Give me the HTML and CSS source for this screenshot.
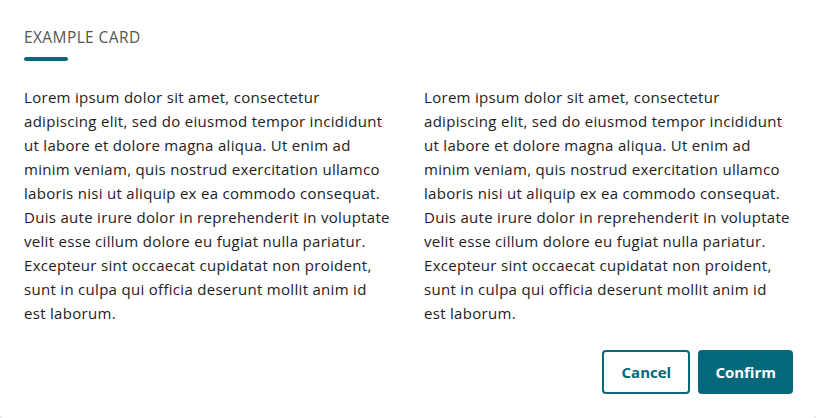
FILE: index.html
```html
<!DOCTYPE html>
<html lang="en">
<head>
<meta charset="utf-8">
<link rel="stylesheet" href="styles.css">
<title>Example card</title>
</head>
<body>
<div class="card">
  <header class="card-header">
    <h2 class="card-title">EXAMPLE CARD</h2>
    <span class="card-rule"></span>
  </header>
  <div class="card-body">
    <p>Lorem ipsum dolor sit amet, consectetur adipiscing elit, sed do eiusmod tempor incididunt ut labore et dolore magna aliqua. Ut enim ad minim veniam, quis nostrud exercitation ullamco laboris nisi ut aliquip ex ea commodo consequat. Duis aute irure dolor in reprehenderit in voluptate velit esse cillum dolore eu fugiat nulla pariatur. Excepteur sint occaecat cupidatat non proident, sunt in culpa qui officia deserunt mollit anim id est laborum.</p>
    <p>Lorem ipsum dolor sit amet, consectetur adipiscing elit, sed do eiusmod tempor incididunt ut labore et dolore magna aliqua. Ut enim ad minim veniam, quis nostrud exercitation ullamco laboris nisi ut aliquip ex ea commodo consequat. Duis aute irure dolor in reprehenderit in voluptate velit esse cillum dolore eu fugiat nulla pariatur. Excepteur sint occaecat cupidatat non proident, sunt in culpa qui officia deserunt mollit anim id est laborum.</p>
  </div>
  <footer class="card-actions">
    <button class="btn btn-secondary">Cancel</button>
    <button class="btn btn-primary">Confirm</button>
  </footer>
</div>
</body>
</html>
```
FILE: styles.css
```css
html, body {
  margin: 0;
  padding: 0;
  background: #e9e9e9;
}
body {
  font-family: "Open Sans", Lato, sans-serif;
  color: #222;
}
.card {
  box-sizing: border-box;
  width: 816px;
  height: 418px;
  background: #fff;
  border-radius: 0 0 4px 4px;
  padding: 27px 23px 24px 24px;
  display: flex;
  flex-direction: column;
}
.card-header {
  display: flex;
  flex-direction: column;
  gap: 10px;
}
.card-title {
  margin: 0;
  font-size: 15.5px;
  font-weight: 400;
  line-height: 20px;
  color: #555;
  letter-spacing: 0.4px;
}
.card-rule {
  display: block;
  width: 44px;
  height: 4px;
  border-radius: 2px;
  background: #03697a;
}
.card-body {
  display: grid;
  grid-template-columns: 1fr 1fr;
  column-gap: 32px;
  margin-top: 24px;
  padding-right: 1px;
}
.card-body p {
  margin: 0;
  font-size: 15px;
  line-height: 24px;
  letter-spacing: 0.3px;
  color: #222;
}
.card-actions {
  margin-top: auto;
  display: flex;
  justify-content: flex-end;
  gap: 8px;
}
.btn {
  box-sizing: border-box;
  height: 44px;
  min-width: 88px;
  padding: 0 15px;
  border-radius: 4px;
  font-family: inherit;
  font-size: 15px;
  font-weight: 700;
  border: 2px solid #03697a;
  cursor: pointer;
}
.btn-secondary {
  background: #fff;
  color: #03697a;
}
.btn-primary {
  background: #03697a;
  color: #fff;
}
```
